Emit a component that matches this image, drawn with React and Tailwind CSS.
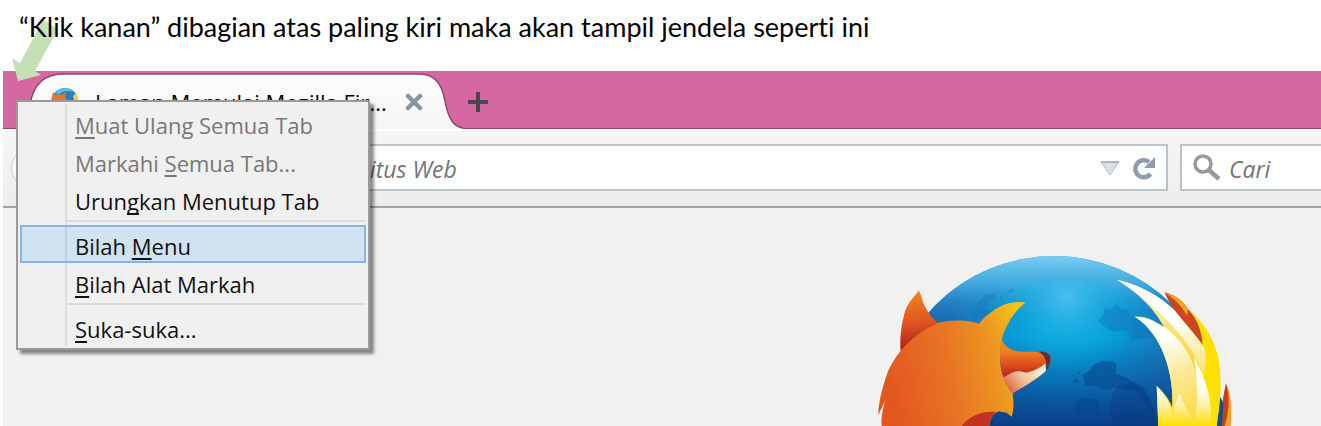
import { useState } from "react";

const menuGroups = [
  [
    { before: "", key: "M", after: "uat Ulang Semua Tab", disabled: true },
    { before: "Markahi ", key: "S", after: "emua Tab...", disabled: true },
    { before: "Urun", key: "g", after: "kan Menutup Tab" },
  ],
  [
    { before: "Bilah ", key: "M", after: "enu" },
    { before: "", key: "B", after: "ilah Alat Markah" },
  ],
  [{ before: "", key: "S", after: "uka-suka..." }],
];

export default function App() {
  const [active, setActive] = useState("Bilah Menu");

  return (
    <main className="relative min-h-screen overflow-hidden bg-white pl-[3px]">
      <h1 className="h-[71px] pt-[11px] pl-4 font-[Lato,sans-serif] text-[27px] leading-8 text-black [font-variant-ligatures:none]">
        <span className="relative z-10">
          “Klik kanan” dibagian atas paling kiri maka akan tampil jendela seperti ini
        </span>
      </h1>
      <PointerArrow />

      <div className="bg-[#f1f1f1] font-['Open_Sans',sans-serif]">
        <TabStrip />
        <Toolbar />
        <div className="flex justify-end pt-[42px] pr-[81px]">
          <FirefoxLogo />
        </div>
      </div>

      <ContextMenu active={active} onSelect={setActive} />
    </main>
  );
}

function TabStrip() {
  return (
    <div className="flex h-[58px] items-center border-b border-[#92466f] bg-[#d568a1]">
      <div className="relative ml-6 flex h-[58px] w-[436px] items-center pt-1 pl-5">
        <svg className="absolute inset-0 h-[58px] w-[436px]" viewBox="0 0 436 58" aria-hidden="true">
          <defs>
            <linearGradient id="tabFill" x1="0" y1="0" x2="0" y2="1">
              <stop offset="0" stopColor="#fdfdfd" />
              <stop offset="1" stopColor="#f5f5f5" />
            </linearGradient>
          </defs>
          <path
            d="M-10 59C-2 56 1 46 3 34C6 14 16 3 36 3H392C409 3 415 14 418 30C421 46 426 57 438 57V59Z"
            fill="url(#tabFill)"
            stroke="#92466f"
            strokeWidth="1.5"
          />
        </svg>
        <svg className="relative h-8 w-8" viewBox="0 0 32 32" aria-hidden="true">
          <circle cx="18" cy="15" r="13" fill="#2381bf" />
          <path d="M9 7C13 1 22 1 26 6C21 4 15 5 11 9Z" fill="#62bced" />
          <path d="M29 7C35 18 29 29 17 30C25 25 29 18 26 10Z" fill="#f8cf45" />
          <path d="M4 15L6 6L9 9L16 8L20 6C18 9 17 12 20 14L15 18L18 27C8 28 2 22 4 15Z" fill="#e87722" />
        </svg>
        <span className="relative ml-4 flex-1 text-[22px] leading-8 whitespace-nowrap text-black">
          Laman Memulai Mozilla Fir...
        </span>
        <button type="button" aria-label="Tutup tab" className="relative mr-10">
          <svg className="h-[18px] w-[18px]" viewBox="0 0 18 18">
            <path d="M3 3L15 15M15 3L3 15" stroke="#8b949c" strokeWidth="4.5" strokeLinecap="round" />
          </svg>
        </button>
      </div>
      <button type="button" aria-label="Tab baru" className="ml-1 pt-1">
        <svg className="h-[22px] w-[22px]" viewBox="0 0 22 22">
          <path d="M11 1V21M1 11H21" stroke="#484848" strokeWidth="4" />
        </svg>
      </button>
    </div>
  );
}

function Toolbar() {
  return (
    <div className="flex h-[79px] items-center border-t-2 border-b-2 border-t-white border-b-[#a3a3a3] bg-linear-to-b from-[#f6f6f6] to-[#ededed] pb-[2px] pl-2">
      <button
        type="button"
        aria-label="Kembali"
        className="h-10 w-10 shrink-0 rounded-full border border-[#cfcfcf] bg-[#f8f8f8]"
      />
      <div className="flex h-[47px] flex-1 items-center border-2 border-[#b9c3cd] bg-white">
        <input
          type="text"
          aria-label="Alamat"
          placeholder="Cari atau ketik alamat situs Web"
          className="min-w-0 flex-1 bg-transparent pt-1 pl-[75px] text-[23px] italic outline-none placeholder:text-[#757575]"
        />
        <button type="button" aria-label="Riwayat">
          <svg className="h-5 w-5" viewBox="0 0 20 20">
            <path d="M1 4H19L10 17Z" fill="#d8dee5" stroke="#b8bec5" />
            <path d="M1 4H19" stroke="#a8adb3" strokeWidth="1.5" />
          </svg>
        </button>
        <button type="button" aria-label="Muat ulang" className="mr-[10px] ml-3">
          <svg className="h-6 w-6" viewBox="0 0 24 24">
            <path d="M18.500 18A8.500 8.500 0 1 1 17 6" fill="none" stroke="#8f9dab" strokeWidth="4.500" />
            <path d="M23 1V12H12Z" fill="#8f9dab" />
          </svg>
        </button>
      </div>
      <div className="ml-3 flex h-[47px] w-[141px] items-center border-2 border-r-0 border-[#b9c3cd] bg-white pl-[11px]">
        <svg className="h-7 w-7 shrink-0" viewBox="0 0 28 28" aria-hidden="true">
          <circle cx="10" cy="10" r="8" fill="none" stroke="#999" strokeWidth="3.5" />
          <path d="M16 16L26 25" stroke="#999" strokeWidth="4.500" />
        </svg>
        <input
          type="search"
          aria-label="Cari"
          placeholder="Cari"
          className="min-w-0 flex-1 bg-transparent pt-1 pl-2 text-[23px] italic outline-none placeholder:text-[#757575]"
        />
      </div>
    </div>
  );
}

function ContextMenu({ active, onSelect }) {
  return (
    <div
      role="menu"
      className="absolute top-[100px] left-4 z-20 w-[354px] border-2 border-[#9a9a9a] bg-[#f0f0f0] p-[2px] font-['Open_Sans',sans-serif] shadow-[4px_4px_3px_rgba(0,0,0,0.45)]"
    >
      {menuGroups.map((group, index) => (
        <div key={index}>
          {index > 0 && (
            <div className="flex h-[7px]">
              <div className="w-[47px] border-r-2 border-[#dcdcdc]" />
              <div className="mt-[2px] flex-1 border-t-2 border-[#dcdcdc]" />
            </div>
          )}
          {group.map((item) => (
            <MenuItem key={item.before + item.after} item={item} active={active} onSelect={onSelect} />
          ))}
        </div>
      ))}
    </div>
  );
}

function MenuItem({ item, active, onSelect }) {
  const label = item.before + item.key + item.after;
  const isActive = label === active;

  return (
    <button
      type="button"
      role="menuitem"
      disabled={item.disabled}
      onClick={() => onSelect(label)}
      className={`flex h-[38px] w-full text-left text-[22px] ${
        item.disabled ? "text-[#787878]" : "text-[#111]"
      } ${isActive ? "bg-[#d1e2f2] outline-2 -outline-offset-2 outline-[#83b7eb]" : ""}`}
    >
      <span
        className={`h-full w-[47px] shrink-0 border-r-2 ${
          isActive ? "border-[#bfcfde]" : "border-[#dcdcdc]"
        }`}
      />
      <span className="pt-[5px] pl-2 leading-8 whitespace-nowrap">
        {item.before}
        <u className="decoration-2 underline-offset-[3px] [text-decoration-skip-ink:none]">{item.key}</u>
        {item.after}
      </span>
    </button>
  );
}

function PointerArrow() {
  return (
    <svg className="absolute top-5 left-3 z-0 h-[62px] w-12" viewBox="0 0 48 62" aria-hidden="true">
      <path d="M31 0L46 9L23 51L29 55L6 61L0 38L8 43Z" fill="#c5e0b4" />
    </svg>
  );
}

function FirefoxLogo() {
  return (
    <svg className="h-[176px] w-[370px]" viewBox="30 30 1110 528" role="img" aria-label="Firefox">
      <defs>
        <radialGradient id="globe" gradientUnits="userSpaceOnUse" cx="620" cy="240" r="500">
          <stop offset="0" stopColor="#00a9df" />
          <stop offset="0.350" stopColor="#0797d2" />
          <stop offset="0.700" stopColor="#1b6eb3" />
          <stop offset="1" stopColor="#1568ad" />
        </radialGradient>
        <linearGradient id="rim" x1="0" y1="48" x2="0" y2="250" gradientUnits="userSpaceOnUse">
          <stop offset="0" stopColor="#7cccf3" />
          <stop offset="0.450" stopColor="#46aee2" stopOpacity="0.800" />
          <stop offset="1" stopColor="#1678bd" stopOpacity="0" />
        </linearGradient>
        <linearGradient id="deep" x1="0" y1="300" x2="0" y2="558" gradientUnits="userSpaceOnUse">
          <stop offset="0" stopColor="#0a4f9b" stopOpacity="0" />
          <stop offset="1" stopColor="#083f88" />
        </linearGradient>
        <radialGradient id="glow" cx="620" cy="170" r="230" gradientUnits="userSpaceOnUse">
          <stop offset="0" stopColor="#4abdec" />
          <stop offset="1" stopColor="#00a9df" stopOpacity="0" />
        </radialGradient>
        <linearGradient id="head" x1="90" y1="480" x2="470" y2="400" gradientUnits="userSpaceOnUse">
          <stop offset="0" stopColor="#e2571f" />
          <stop offset="0.500" stopColor="#e87524" />
          <stop offset="0.850" stopColor="#ec9521" />
          <stop offset="1" stopColor="#efa91e" />
        </linearGradient>
        <linearGradient id="innerEar" x1="350" y1="280" x2="480" y2="200" gradientUnits="userSpaceOnUse">
          <stop offset="0" stopColor="#eb8a22" stopOpacity="0" />
          <stop offset="0.500" stopColor="#efa91e" />
          <stop offset="1" stopColor="#f5c51a" />
        </linearGradient>
        <linearGradient id="ear" x1="160" y1="150" x2="180" y2="310" gradientUnits="userSpaceOnUse">
          <stop offset="0" stopColor="#f08a20" />
          <stop offset="0.600" stopColor="#e0561f" />
          <stop offset="1" stopColor="#b92722" />
        </linearGradient>
        <linearGradient id="snout" x1="0" y1="330" x2="0" y2="410" gradientUnits="userSpaceOnUse">
          <stop offset="0" stopColor="#ed8522" />
          <stop offset="0.500" stopColor="#df521f" />
          <stop offset="1" stopColor="#b82524" />
        </linearGradient>
        <linearGradient id="cheek" x1="440" y1="455" x2="540" y2="380" gradientUnits="userSpaceOnUse">
          <stop offset="0" stopColor="#dd5a3a" />
          <stop offset="0.500" stopColor="#f2c29c" />
          <stop offset="1" stopColor="#fff3cf" />
        </linearGradient>
        <linearGradient id="tail" x1="810" y1="130" x2="1000" y2="510" gradientUnits="userSpaceOnUse">
          <stop offset="0" stopColor="#fff6c4" />
          <stop offset="0.400" stopColor="#fae27a" />
          <stop offset="0.700" stopColor="#fbd64a" />
          <stop offset="1" stopColor="#ffe100" />
        </linearGradient>
        <linearGradient id="crest" x1="840" y1="240" x2="960" y2="530" gradientUnits="userSpaceOnUse">
          <stop offset="0" stopColor="#fff" />
          <stop offset="0.250" stopColor="#fff" />
          <stop offset="0.600" stopColor="#fbea9c" />
          <stop offset="1" stopColor="#fbdc4e" />
        </linearGradient>
        <linearGradient id="lick" x1="0" y1="440" x2="0" y2="558" gradientUnits="userSpaceOnUse">
          <stop offset="0" stopColor="#fff" />
          <stop offset="0.500" stopColor="#fdf0a0" />
          <stop offset="1" stopColor="#ffdd00" />
        </linearGradient>
        <linearGradient id="topLick" x1="800" y1="130" x2="1020" y2="400" gradientUnits="userSpaceOnUse">
          <stop offset="0" stopColor="#fff" />
          <stop offset="0.500" stopColor="#fff" />
          <stop offset="1" stopColor="#fbe57d" />
        </linearGradient>
      </defs>

      <circle cx="582" cy="552" r="504" fill="url(#globe)" />
      <circle cx="582" cy="552" r="504" fill="url(#deep)" />
      <circle cx="582" cy="552" r="504" fill="url(#rim)" />
      <ellipse cx="620" cy="390" rx="360" ry="270" fill="url(#glow)" />

      {/* continents */}
      <path d="M340 215L350 190L375 165L405 160L410 172L385 190L375 207L395 212L360 235L340 240ZM416 175L428 162L425 180ZM440 157L470 138L450 160Z" fill="#176daf" opacity="0.300" />
      <path d="M715 245L730 222L735 202L750 210L770 190L780 205L805 210L810 230L840 240L880 290L815 300L800 270L760 275L735 260Z" fill="#1268ad" opacity="0.350" />
      <path d="M668 405L690 390L700 375L725 362L762 365L770 376L765 400L795 410L825 430L850 450L885 515L865 518L850 485L825 450L800 450L770 440L735 450L715 440L675 435ZM638 422L650 415L655 430ZM655 392L660 400L652 404ZM645 505L648 480L665 475L700 475L720 485L712 500L718 530L695 540L665 555Z" fill="#08468d" opacity="0.550" />
      <path d="M770 440L820 425C860 440 880 470 890 558H760C740 520 750 470 770 440Z" fill="#06367a" opacity="0.300" />

      {/* left ear and head */}
      <path d="M175 150C172 165 140 185 132 225C122 265 119 300 122 335L235 250C205 225 190 195 183 165Z" fill="url(#ear)" />
      <path d="M65 558C62 535 70 500 76 480L55 525C55 490 65 450 80 405C100 350 150 285 235 248C280 238 330 240 357 252C370 232 385 225 400 212C425 195 455 183 496 188C465 210 435 255 425 300C412 370 425 420 458 460C461 485 462 510 455 530L440 518L415 514C395 525 390 540 388 558Z" fill="url(#head)" />
      <path d="M325 275L357 252C370 232 385 225 400 212C425 195 455 183 496 188C465 210 435 255 425 300C412 370 425 420 458 460C420 435 390 350 325 275Z" fill="url(#innerEar)" />
      <path d="M305 558C330 525 370 512 408 516C395 530 389 540 388 558Z" fill="#c3311f" />
      <path d="M130 558C130 480 150 400 205 350M175 558C175 500 190 430 225 390M100 558C95 500 110 430 145 390" fill="none" stroke="#d94a1e" strokeWidth="3" opacity="0.250" />

      {/* snout */}
      <path d="M425 298C435 320 455 335 485 335L545 335C562 336 572 342 572 352C572 375 563 390 550 398C530 420 490 440 458 460C425 415 412 370 425 298Z" fill="url(#snout)" />
      <path d="M428 412C450 405 455 392 480 394L500 398C525 392 540 385 556 370L558 392C535 415 490 440 458 460C445 445 435 430 428 412Z" fill="url(#cheek)" />
      <path d="M535 335C560 332 574 345 572 355C570 375 565 385 558 392C559 370 562 350 535 335Z" fill="#603238" />

      {/* tail */}
      <path d="M1098 430C1114 460 1117 520 1112 558H1086C1080 520 1090 470 1098 430Z" fill="#f2a120" />
      <path d="M1098 430C1108 465 1110 505 1094 558H1084C1080 520 1090 470 1098 430Z" fill="#c83c1f" />
      <path d="M1081 470L1090 490L1086 558H1066Z" fill="#144e8d" />
      <path d="M772 120C860 138 960 200 1028 315C1030 260 1010 220 980 205C1050 260 1085 340 1081 430C1082 480 1075 520 1070 558H895L890 438C915 460 928 480 937 503C943 400 905 280 825 230C860 228 895 245 920 278C890 210 830 155 772 120Z" fill="url(#tail)" />
      <path d="M984 208C1050 260 1085 340 1081 430C1082 480 1075 520 1070 558H1052C1052 500 1030 430 1005 380L1038 370C1040 335 1032 315 1028 315C1022 270 1000 235 984 208Z" fill="#ffe100" />
      <path d="M772 120C860 138 960 200 1028 315C1040 335 1040 370 1030 410C1020 350 930 220 772 120Z" fill="url(#topLick)" />
      <path d="M825 230C930 235 1018 350 1012 450C1010 490 1005 530 998 558H950L937 503C943 400 905 280 825 230Z" fill="url(#crest)" />
      <path d="M1002 350C1015 430 1015 500 998 558H1052C1060 490 1040 420 1002 350Z" fill="url(#lick)" />
      <path d="M890 438C915 460 935 500 943 535C940 505 950 475 960 458C965 490 990 510 1000 558H895Z" fill="url(#lick)" />
      <path d="M914 157C950 165 975 190 984 208C1010 235 1025 270 1028 315C995 265 935 215 914 157Z" fill="#cc4520" />
      <path d="M914 157C950 165 975 190 984 208L981 228C965 195 940 175 914 157Z" fill="#f2a51c" />
    </svg>
  );
}
